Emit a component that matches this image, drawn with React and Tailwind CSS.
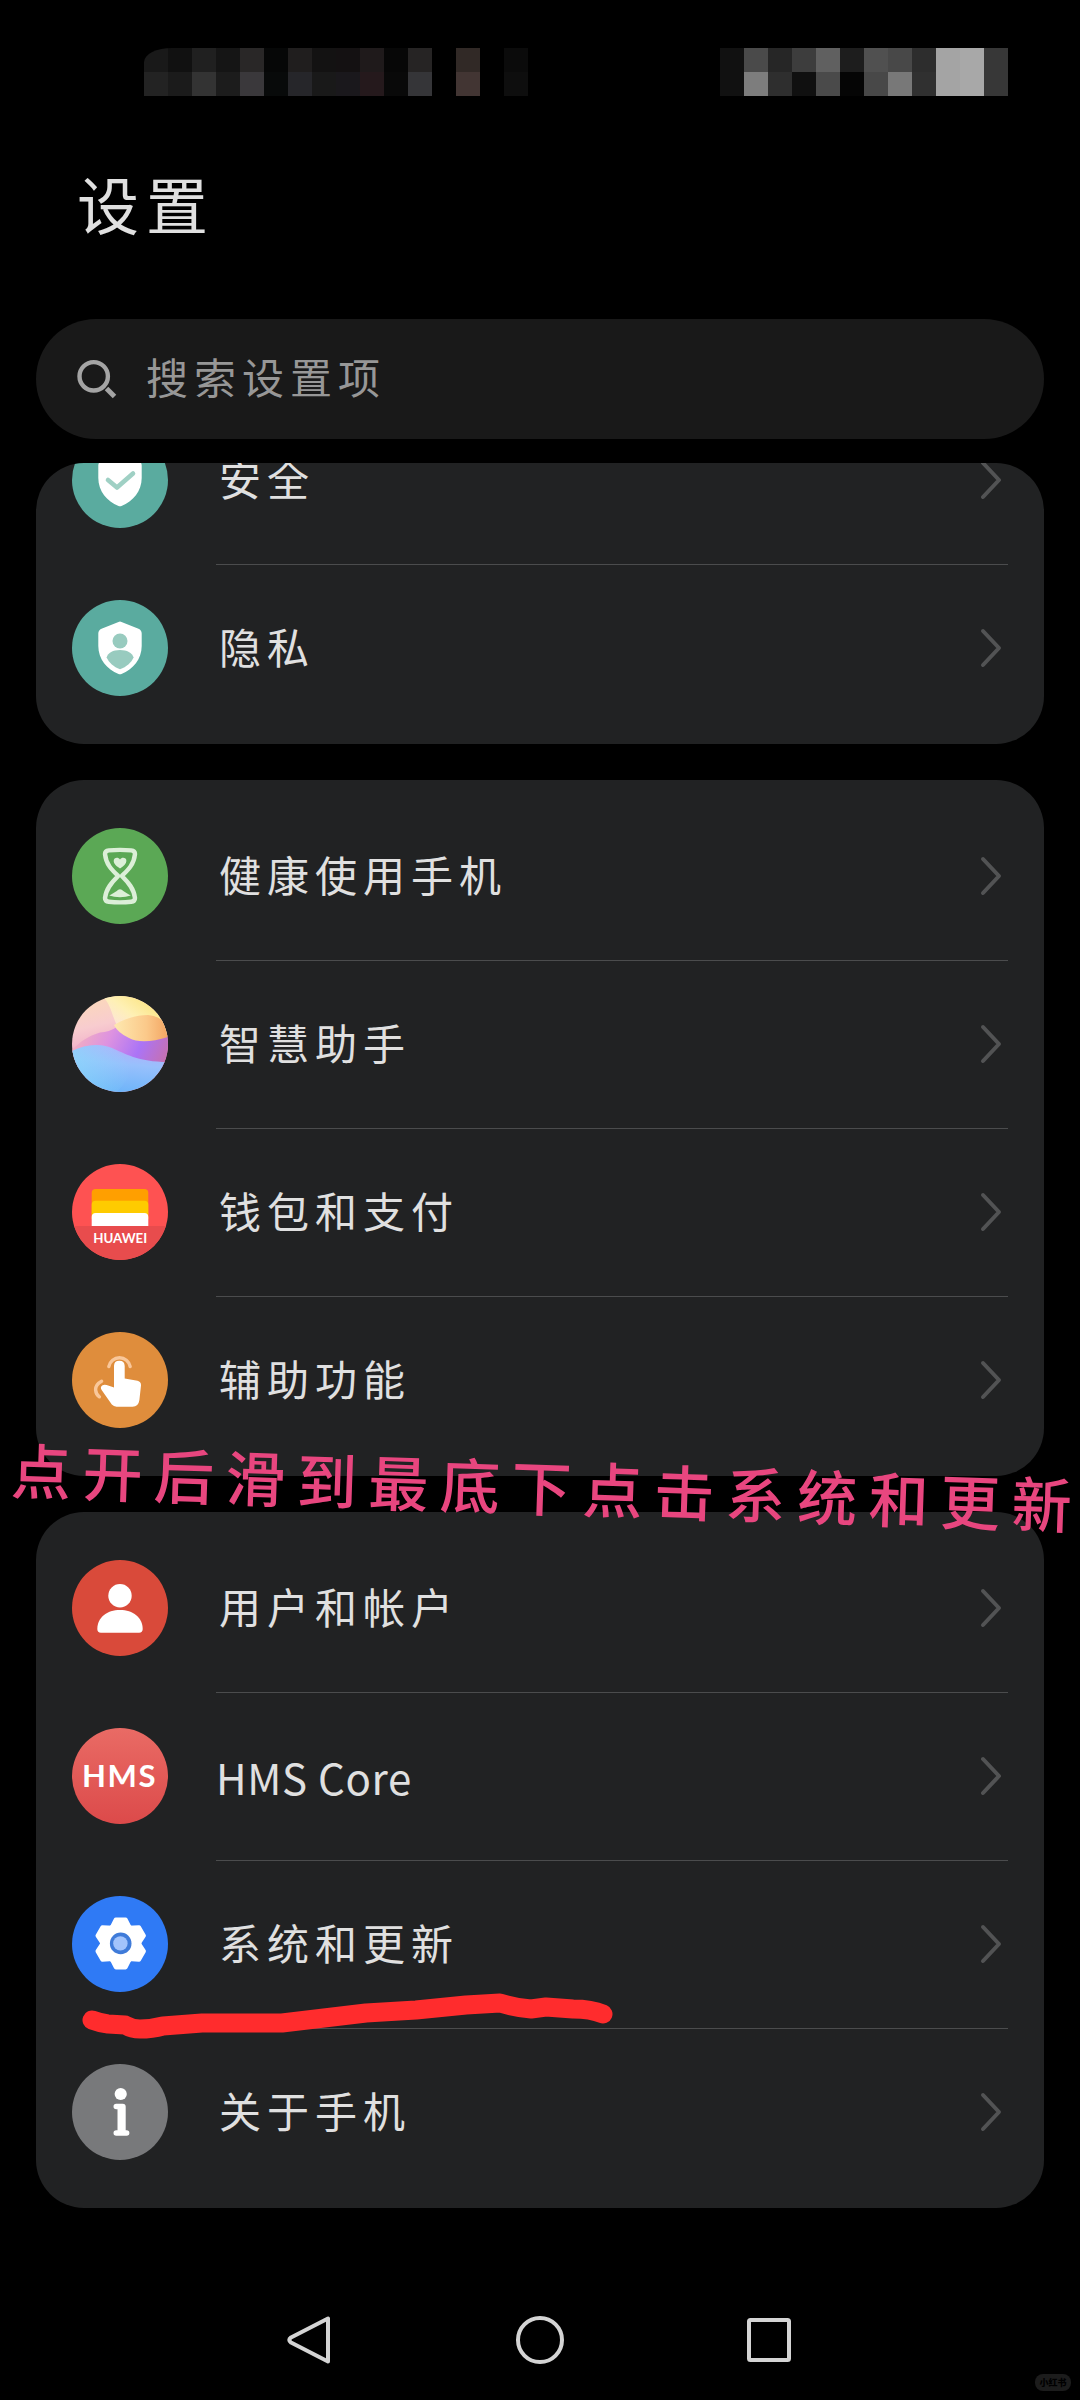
const statusLeft = [
  ['bg-[#191919]', 'bg-[#111111]', 'bg-[#202020]', 'bg-[#151515]', 'bg-[#292727]', 'bg-[#060707]', 'bg-[#201e1e]', 'bg-[#131212]', 'bg-[#141112]', 'bg-[#1f1a1b]', 'bg-[#070707]', 'bg-[#262424]', 'bg-black', 'bg-[#312926]', 'bg-black', 'bg-[#0b0b0b]'],
  ['bg-[#232323]', 'bg-[#1b1b1b]', 'bg-[#333333]', 'bg-[#1c1c1c]', 'bg-[#3a383b]', 'bg-[#080a0a]', 'bg-[#26262a]', 'bg-[#191919]', 'bg-[#1a181c]', 'bg-[#25191c]', 'bg-[#090909]', 'bg-[#353538]', 'bg-black', 'bg-[#423533]', 'bg-black', 'bg-[#0e0e0e]'],
]

const statusRight = [
  ['bg-[#111111]', 'bg-[#4a4a4a]', 'bg-[#262626]', 'bg-[#3d3d3d]', 'bg-[#606060]', 'bg-[#1d1d1d]', 'bg-[#505050]', 'bg-[#484848]', 'bg-[#2d2d2d]', 'bg-[#a4a4a4]', 'bg-[#a8a8a8]', 'bg-[#373737]'],
  ['bg-[#111111]', 'bg-[#7d7d7d]', 'bg-[#2e2e2e]', 'bg-[#101010]', 'bg-[#4a4a4a]', 'bg-[#050505]', 'bg-[#484848]', 'bg-[#787878]', 'bg-[#303030]', 'bg-[#a4a4a4]', 'bg-[#a8a8a8]', 'bg-[#373737]'],
]

function Mosaic({ rows, className = '' }) {
  return (
    <div className={`overflow-hidden ${className}`}>
      {rows.map((row, i) => (
        <div key={i} className="flex">
          {row.map((color, j) => (
            <span key={j} className={`size-6 ${color}`} />
          ))}
        </div>
      ))}
    </div>
  )
}

const SHIELD = 'M46.5 21.9Q48 21.3 49.5 21.9L66.5 28.8Q69.7 30.2 69.7 33.5V46C69.7 59 61 69.5 49.5 74Q48 74.6 46.5 74C35 69.5 26.3 59 26.3 46V33.5Q26.3 30.2 29.5 28.8Z'

function Disc({ fill, children }) {
  return (
    <svg viewBox="0 0 96 96" className="size-24 shrink-0">
      <circle cx="48" cy="48" r="48" fill={fill} />
      {children}
    </svg>
  )
}

function SecurityIcon() {
  return (
    <Disc fill="#5aab9f">
      <path d={SHIELD} fill="#fff" />
      <path d="M36 48L45 55.5L61 41.5" fill="none" stroke="#9fd0c4" strokeWidth="4.6" strokeLinecap="round" strokeLinejoin="round" />
    </Disc>
  )
}

function PrivacyIcon() {
  return (
    <Disc fill="#5aab9f">
      <path d={SHIELD} fill="#fff" />
      <circle cx="48" cy="41" r="7.5" fill="#98cbbf" />
      <path d="M34.6 57.5C36 52.6 41 49.9 48 49.9S60 52.6 61.6 57.5C59.3 62.5 54.5 67 48 69.2C41.6 67 37 62.5 34.6 57.5Z" fill="#98cbbf" />
    </Disc>
  )
}

function HourglassIcon() {
  return (
    <Disc fill="#5ba855">
      <g fill="#dcefd8">
        <path
          d="M33 26Q33 22.8 36.8 22.4Q48 21.4 59.2 22.4Q63 22.8 63 26C62 36.5 56 42 49.8 48C56 54 62 60.5 63 70Q63 73.4 59.2 73.8Q48 75 36.8 73.8Q33 73.4 33 70C34 60.5 40 54 46.2 48C40 42 34 36.5 33 26Z"
          fill="none"
          stroke="#dcefd8"
          strokeWidth="4.4"
          strokeLinejoin="round"
        />
        <path d="M48 40.4C44.5 38.4 41.7 35.8 41.7 33C41.7 29.3 46.4 28.8 48 31.6C49.6 28.8 54.6 29.3 54.4 33C54.3 35.8 51.6 38.4 48 40.4Z" />
        <path d="M37.2 67.6C40 66 44.2 63.8 46.3 61.8Q48 60.5 49.7 61.8C52 63.8 56 66 58.8 67.6Q54 69.3 48 69.3T37.2 67.6Z" />
      </g>
    </Disc>
  )
}

function AssistantIcon() {
  return (
    <svg viewBox="0 0 96 96" className="size-24 shrink-0">
      <defs>
        <clipPath id="orb"><circle cx="48" cy="48" r="48" /></clipPath>
        <linearGradient id="pink" x1="0.2" y1="0" x2="0.45" y2="1">
          <stop offset="0" stopColor="#fbd9b8" />
          <stop offset="0.3" stopColor="#f8cccf" />
          <stop offset="0.6" stopColor="#eda4c8" />
        </linearGradient>
        <linearGradient id="yellow" x1="0" y1="0.7" x2="0.9" y2="0">
          <stop offset="0" stopColor="#fff0e2" stopOpacity="0.6" />
          <stop offset="0.45" stopColor="#fef0b4" />
          <stop offset="1" stopColor="#fae06c" />
        </linearGradient>
        <linearGradient id="orange" x1="0" y1="0.5" x2="1" y2="0.5">
          <stop offset="0" stopColor="#fee9b0" />
          <stop offset="0.6" stopColor="#fbc98a" />
          <stop offset="1" stopColor="#f3a562" />
        </linearGradient>
        <linearGradient id="violet" x1="0" y1="0.4" x2="1" y2="0.6">
          <stop offset="0" stopColor="#f2b0c0" />
          <stop offset="0.35" stopColor="#dd92e0" />
          <stop offset="0.7" stopColor="#ab74f6" />
          <stop offset="1" stopColor="#c470b4" />
        </linearGradient>
        <linearGradient id="azure" x1="0.6" y1="0" x2="0.4" y2="1">
          <stop offset="0" stopColor="#b7adfb" />
          <stop offset="0.4" stopColor="#98c0fc" />
          <stop offset="1" stopColor="#6cb4f9" />
        </linearGradient>
        <linearGradient id="cyan" x1="0" y1="0.5" x2="1" y2="0.5">
          <stop offset="0" stopColor="#8adafb" />
          <stop offset="1" stopColor="#8adafb" stopOpacity="0" />
        </linearGradient>
      </defs>
      <g clipPath="url(#orb)">
        <rect width="96" height="96" fill="url(#pink)" />
        <path d="M30 0C40 8 40 24 48 34L96 40V0Z" fill="url(#yellow)" />
        <path d="M0 54C8 46 16 40 28 36.5Q37 36 45 31C56 40 70 46 96 40V72H0Z" fill="url(#violet)" />
        <path d="M42 29C52 23 64 19 76 19Q90 20 96 32V41C80 46 66 47 57 42Q46 37 42 29Z" fill="url(#orange)" />
        <path d="M0 55C14 48 28 47 40 52S66 66 96 66V96H0Z" fill="url(#azure)" />
        <path d="M0 55C14 48 28 47 40 52Q56 62 58 76Q54 88 44 96H0Z" fill="url(#cyan)" opacity="0.7" />
      </g>
    </svg>
  )
}

function WalletIcon() {
  return (
    <Disc fill="#fe5252">
      <path d="M2.1 62H93.9A48 48 0 0 1 2.1 62Z" fill="#e84c4d" />
      <path d="M19.7 29Q19.7 25 23.7 25H72.3Q76.3 25 76.3 29V50H19.7Z" fill="#ff9f00" />
      <path d="M19.7 40.5Q19.7 36.7 23.7 36.7H72.3Q76.3 36.7 76.3 40.5V55H19.7Z" fill="#fecb00" />
      <path d="M19.7 53Q19.7 49 23.7 49H72.3Q76.3 49 76.3 53V62H19.7Z" fill="#fff" />
      <text x="21.2" y="79.4" textLength="54" lengthAdjust="spacingAndGlyphs" fill="#fff" className="font-['Lato'] text-[12.5px] font-bold">
        HUAWEI
      </text>
    </Disc>
  )
}

function TouchIcon() {
  return (
    <Disc fill="#df8d3c">
      <g fill="none" stroke="#f9c79a" strokeWidth="3.4" strokeLinecap="round">
        <path d="M36.8 34.6A10.9 10.9 0 0 1 58.2 34.6" />
        <path d="M29.6 49.3Q23.4 52.5 23.6 58Q24 62.5 27.4 64.8" />
      </g>
      <path
        d="M42 34Q42 28.7 47.3 28.7T52.7 34V46.5L65.5 48.8Q69.3 49.7 69 53.5L67.4 68Q66.5 74.7 60.5 74.7H44.5Q41.8 74.7 39.8 72.6L29.8 58.2Q27.6 54.8 30.6 53.2Q32.2 52.3 34.6 53L42 55.6Z"
        fill="#fff"
      />
    </Disc>
  )
}

function AccountIcon() {
  return (
    <Disc fill="#d94a3a">
      <circle cx="48" cy="35.7" r="11.7" fill="#fff" />
      <path d="M25.3 69C25.3 57.5 35 50 48 50S70.7 57.5 70.7 69Q70.7 72.7 67 72.7H29Q25.3 72.7 25.3 69Z" fill="#fff" />
    </Disc>
  )
}

function HmsIcon() {
  return (
    <Disc fill="url(#hms)">
      <defs>
        <linearGradient id="hms" x1="0" y1="0" x2="0" y2="1">
          <stop offset="0" stopColor="#e96b65" />
          <stop offset="1" stopColor="#dc4a4a" />
        </linearGradient>
      </defs>
      <text x="10" y="59.2" textLength="75" lengthAdjust="spacingAndGlyphs" fill="#fff" className="font-['Lato'] text-[30px] font-bold tracking-[1.5px]">
        HMS
      </text>
    </Disc>
  )
}

function GearIcon() {
  return (
    <Disc fill="#2f7af5">
      <g fill="#fff" stroke="#fff" strokeWidth="4" strokeLinejoin="round">
        <circle cx="48.7" cy="47.4" r="18.6" />
        {[0, 60, 120, 180, 240, 300].map((angle) => (
          <path key={angle} d="M39 33L43.8 23.4H53.6L58.4 33Z" transform={`rotate(${angle} 48.7 47.4)`} />
        ))}
      </g>
      <circle cx="48.7" cy="47.4" r="10.8" fill="#3f7bd9" />
      <circle cx="48.4" cy="47.4" r="7.2" fill="#a3c4fc" />
    </Disc>
  )
}

function InfoIcon() {
  return (
    <Disc fill="#78797b">
      <circle cx="48.7" cy="30" r="6.1" fill="#fff" />
      <path d="M44.3 39.7H50.7Q53.7 39.7 53.7 42.7V66.2H54.6A2.8 2.8 0 0 1 54.6 71.8H44.3A2.8 2.8 0 0 1 44.3 66.2H45.5V45.3H44.3A2.8 2.8 0 0 1 44.3 39.7Z" fill="#fff" />
    </Disc>
  )
}

const groups = [
  [
    { label: '安全', icon: SecurityIcon },
    { label: '隐私', icon: PrivacyIcon },
  ],
  [
    { label: '健康使用手机', icon: HourglassIcon },
    { label: '智慧助手', icon: AssistantIcon },
    { label: '钱包和支付', icon: WalletIcon },
    { label: '辅助功能', icon: TouchIcon },
  ],
  [
    { label: '用户和帐户', icon: AccountIcon },
    { label: 'HMS Core', icon: HmsIcon, latin: true },
    { label: '系统和更新', icon: GearIcon, marked: true },
    { label: '关于手机', icon: InfoIcon },
  ],
]

function Row({ item, first }) {
  const Icon = item.icon
  return (
    <li className="relative flex h-42 shrink-0 pl-9">
      <div className="flex items-center">
        <Icon />
      </div>
      <div className={`mr-9 ml-12 flex flex-1 items-center justify-between border-t pr-1 ${first ? 'border-transparent' : 'border-[#4b4c4d]'}`}>
        <span className={item.latin ? 'pb-px text-[42px] tracking-[0.7px]' : 'pb-1.5 pl-[3px] text-[42px] tracking-[6px]'}>{item.label}</span>
        <svg viewBox="0 0 24 42" className="mb-0.5 h-[42px] w-6" fill="none" stroke="#525354" strokeWidth="4" strokeLinecap="round" strokeLinejoin="round">
          <path d="M3 4L19 21L3 38" />
        </svg>
      </div>
      {item.marked && (
        <svg viewBox="0 0 540 50" className="absolute top-[132px] left-10 z-10 h-[50px] w-[540px]">
          <path
            d="M16 28Q24 31 32 32L49 33Q56 37 64 37Q76 37 87 34L126 31H206L248 26L290 21L340 18L390 13L424 11Q440 16 455 17L470 15L497 17Q515 17 527 22"
            fill="none"
            stroke="#ff2c2d"
            strokeWidth="19"
            strokeLinecap="round"
            strokeLinejoin="round"
          />
        </svg>
      )}
    </li>
  )
}

function Group({ items, scrolled }) {
  return (
    <ul className={`overflow-hidden rounded-[48px] bg-[#212223] pb-3 ${scrolled ? 'flex h-[281px] flex-col justify-end' : 'pt-3'}`}>
      {items.map((item, i) => (
        <Row key={item.label} item={item} first={i === 0} />
      ))}
    </ul>
  )
}

export default function App() {
  return (
    <div className="relative flex h-[2400px] w-[1080px] flex-col overflow-hidden bg-black font-['Noto_Sans_CJK_SC',sans-serif] font-normal text-[#e0e0e0]">
      <header className="flex h-[144px] shrink-0 items-start justify-between pt-12 pr-[72px] pl-[144px]">
        <Mosaic rows={statusLeft} className="rounded-tl-[28px_14px]" />
        <Mosaic rows={statusRight} />
      </header>

      <h1 className="h-[175px] shrink-0 pl-[77px] text-[62px] leading-[118px] tracking-[7px]">设置</h1>

      <main className="flex flex-col px-9">
        <div className="mb-6 flex h-30 items-center rounded-full bg-[#191919] pl-10 text-[#979797]">
          <svg viewBox="0 0 42 42" className="size-[42px]" fill="none" stroke="#a4a4a4" strokeWidth="4.4">
            <circle cx="17.7" cy="18.3" r="14.2" />
            <path d="M30.5 30.5L38.5 38.5" strokeWidth="5" />
          </svg>
          <span className="pb-2 pl-[28px] text-[42px] tracking-[6px]">搜索设置项</span>
        </div>
        <div className="flex flex-col gap-9">
          {groups.map((items, i) => (
            <Group key={i} items={items} scrolled={i === 0} />
          ))}
        </div>
      </main>

      <p className="absolute top-[1440px] left-[11px] z-20 rotate-[1.9deg] text-[60px] leading-[90px] font-medium tracking-[11.5px] whitespace-nowrap text-[#e8467f]">
        点开后滑到最底下点击系统和更<span className="tracking-normal">新</span>
      </p>

      <nav className="flex flex-1 items-start justify-center gap-[178px] pt-[106px]">
        <svg viewBox="0 0 50 52" className="h-[52px] w-[50px]" fill="none" stroke="#d4d4d4" strokeWidth="4" strokeLinejoin="round">
          <path d="M42 4.5V47.5L5 28.5Q1.5 26 5 23.5Z" />
        </svg>
        <svg viewBox="0 0 52 52" className="size-[52px]" fill="none" stroke="#d4d4d4" strokeWidth="4">
          <circle cx="26" cy="26" r="22" />
        </svg>
        <svg viewBox="0 0 50 52" className="h-[52px] w-[50px]" fill="none" stroke="#d4d4d4" strokeWidth="4">
          <rect x="5" y="6" width="40" height="40" rx="1.5" />
        </svg>
      </nav>

      <span className="absolute right-[9px] bottom-[9px] flex h-[17px] w-9 items-center justify-center rounded-lg bg-[#1c1c1c] text-[9px] font-black text-black">
        小红书
      </span>
    </div>
  )
}
